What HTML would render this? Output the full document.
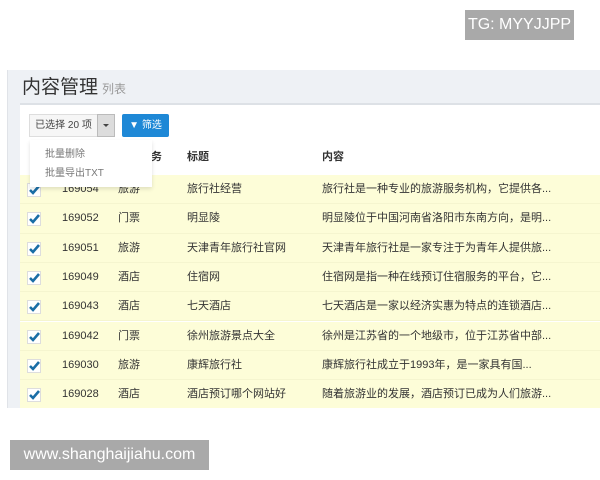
<!DOCTYPE html>
<html><head><meta charset="utf-8"><style>
*{margin:0;padding:0;box-sizing:border-box}
body{width:600px;height:480px;background:#fff;position:relative;overflow:hidden;font-family:"Liberation Sans","Noto Sans CJK SC",sans-serif;color:#333}
.abs{position:absolute}
.tg{left:465px;top:10px;width:109px;height:30px;background:#a9a9a9;color:#fff;font-size:16px;line-height:30px;text-align:center}
.wm{left:10px;top:440px;width:199px;height:30px;background:#a9a9a9;color:#fff;font-size:16px;line-height:30px;text-align:center}
.side{left:0;top:70px;width:8px;height:338px;background:#fff;border-right:1px solid #e0e3e8}
.pane{left:8px;top:70px;width:592px;height:338px;background:#eef1f5}
.title{left:22px;top:72px;font-size:19px;color:#333}
.title small{font-size:12px;color:#999;margin-left:4px}
.content{left:20px;top:103px;width:580px;height:305px;background:#fff;border-top:2px solid #dde1e6}
.b1{left:29px;top:114px;width:69px;height:23px;background:#f6f6f6;border:1px solid #ddd;font-size:10px;line-height:21px;text-align:center;color:#444}
.b2{left:97px;top:114px;width:18px;height:23px;background:#dcdcdc;border:1px solid #bbb}
.b2:after{content:"";position:absolute;left:5px;top:9px;border-left:3px solid transparent;border-right:3px solid transparent;border-top:3px solid #444}
.b3{left:122px;top:114px;width:47px;height:23px;background:#1e88d6;border-radius:2px;color:#fff;font-size:10px;line-height:23px;text-align:center}
.menu{left:30px;top:140px;width:122px;height:47px;background:#fff;box-shadow:0 2px 4px rgba(0,0,0,.12);font-size:10px;color:#777;padding:5px 0 0 15px;line-height:19px;z-index:3}
.th{top:148px;font-size:11px;font-weight:bold;color:#333}
.row{left:20px;width:580px;height:29.3px;background:#fdfdd8;border-bottom:1px solid #f5f5cf;font-size:11px;line-height:29px}
.row span{position:absolute}
.cb{left:7px;top:8px;width:14px;height:14px;background:#fff;border:1px solid #ddd}
.cb svg{position:absolute;left:1px;top:1px}
</style></head><body>
<div class="abs tg">TG: MYYJJPP</div>
<div class="abs side"></div>
<div class="abs pane"></div>
<div class="abs title">内容管理<small>列表</small></div>
<div class="abs content"></div>
<div class="abs b1">已选择 20 项</div>
<div class="abs b2"></div>
<div class="abs b3">▼ 筛选</div>
<div class="abs th" style="left:140px">业务</div>
<div class="abs th" style="left:187px">标题</div>
<div class="abs th" style="left:322px">内容</div>
<div class="abs menu">批量删除<br>批量导出TXT</div>
<div id="rows"></div>
<div class="abs row" style="top:175px"><span class="cb"><svg width="11" height="10"><path d="M1 5 L4 8 L10 1" stroke="#1a6ea6" stroke-width="2.6" fill="none"/></svg></span><span style="left:42px">169054</span><span style="left:98px">旅游</span><span style="left:167px">旅行社经营</span><span style="left:302px">旅行社是一种专业的旅游服务机构，它提供各...</span></div>
<div class="abs row" style="top:204.3px"><span class="cb"><svg width="11" height="10"><path d="M1 5 L4 8 L10 1" stroke="#1a6ea6" stroke-width="2.6" fill="none"/></svg></span><span style="left:42px">169052</span><span style="left:98px">门票</span><span style="left:167px">明显陵</span><span style="left:302px">明显陵位于中国河南省洛阳市东南方向，是明...</span></div>
<div class="abs row" style="top:233.6px"><span class="cb"><svg width="11" height="10"><path d="M1 5 L4 8 L10 1" stroke="#1a6ea6" stroke-width="2.6" fill="none"/></svg></span><span style="left:42px">169051</span><span style="left:98px">旅游</span><span style="left:167px">天津青年旅行社官网</span><span style="left:302px">天津青年旅行社是一家专注于为青年人提供旅...</span></div>
<div class="abs row" style="top:262.9px"><span class="cb"><svg width="11" height="10"><path d="M1 5 L4 8 L10 1" stroke="#1a6ea6" stroke-width="2.6" fill="none"/></svg></span><span style="left:42px">169049</span><span style="left:98px">酒店</span><span style="left:167px">住宿网</span><span style="left:302px">住宿网是指一种在线预订住宿服务的平台，它...</span></div>
<div class="abs row" style="top:292.2px"><span class="cb"><svg width="11" height="10"><path d="M1 5 L4 8 L10 1" stroke="#1a6ea6" stroke-width="2.6" fill="none"/></svg></span><span style="left:42px">169043</span><span style="left:98px">酒店</span><span style="left:167px">七天酒店</span><span style="left:302px">七天酒店是一家以经济实惠为特点的连锁酒店...</span></div>
<div class="abs row" style="top:321.5px"><span class="cb"><svg width="11" height="10"><path d="M1 5 L4 8 L10 1" stroke="#1a6ea6" stroke-width="2.6" fill="none"/></svg></span><span style="left:42px">169042</span><span style="left:98px">门票</span><span style="left:167px">徐州旅游景点大全</span><span style="left:302px">徐州是江苏省的一个地级市，位于江苏省中部...</span></div>
<div class="abs row" style="top:350.8px"><span class="cb"><svg width="11" height="10"><path d="M1 5 L4 8 L10 1" stroke="#1a6ea6" stroke-width="2.6" fill="none"/></svg></span><span style="left:42px">169030</span><span style="left:98px">旅游</span><span style="left:167px">康辉旅行社</span><span style="left:302px">康辉旅行社成立于1993年，是一家具有国...</span></div>
<div class="abs row" style="top:380.1px;height:28px;border:0"><span class="cb"><svg width="11" height="10"><path d="M1 5 L4 8 L10 1" stroke="#1a6ea6" stroke-width="2.6" fill="none"/></svg></span><span style="left:42px">169028</span><span style="left:98px">酒店</span><span style="left:167px">酒店预订哪个网站好</span><span style="left:302px">随着旅游业的发展，酒店预订已成为人们旅游...</span></div>
<div class="abs wm">www.shanghaijiahu.com</div>
</body></html>
